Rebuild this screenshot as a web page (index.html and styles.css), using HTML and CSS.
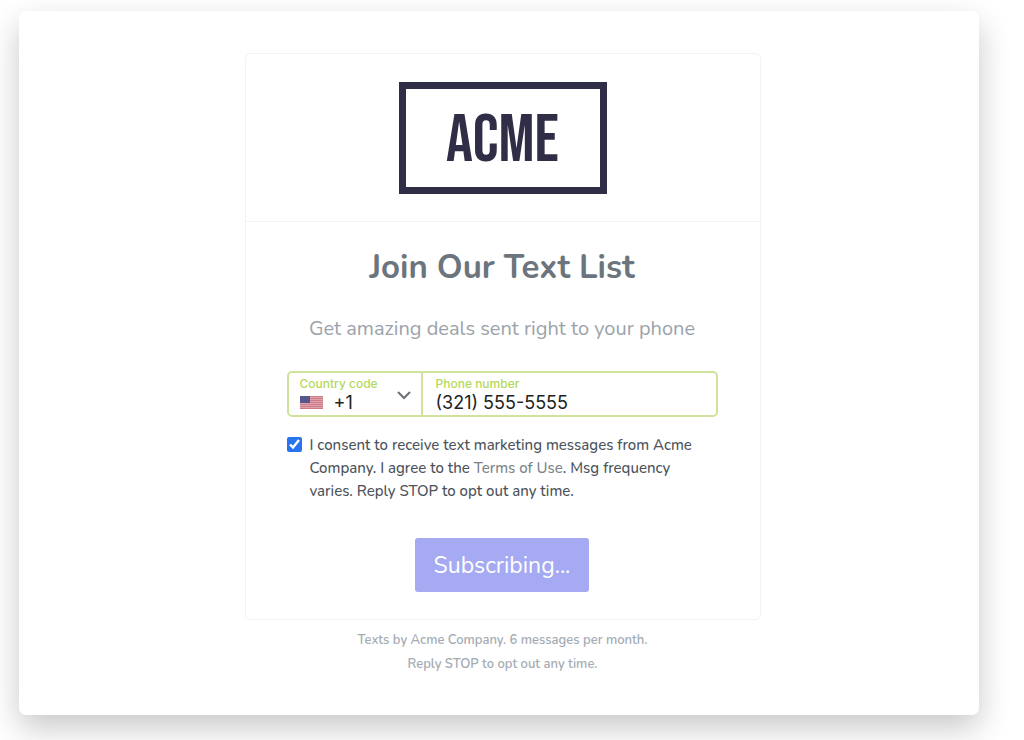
FILE: index.html
```html
<!DOCTYPE html>
<html lang="en">
<head>
    <meta charset="utf-8">
    <meta name="viewport" content="width=device-width, initial-scale=1">
    <title>Join Our Text List</title>
    <link rel="stylesheet" href="styles.css">
</head>
<body>
    <main class="panel">
        <div class="card">
            <div class="card-header">
                <div class="logo">ACME</div>
            </div>
            <form class="signup">
                <h1>Join Our Text List</h1>
                <p class="lead">Get amazing deals sent right to your phone</p>

                <div class="phone-row">
                    <div class="field country">
                        <label for="country">Country code</label>
                        <div class="country-value">
                            <svg class="flag" viewBox="0 0 23 13" aria-hidden="true">
                                <rect width="23" height="13" fill="#e0a3ac"/>
                                <path d="M0 .5h23M0 2.5h23M0 4.5h23M0 6.5h23M0 8.5h23M0 10.5h23M0 12.5h23" stroke="#cc7c88"/>
                                <rect width="10" height="7" fill="#55568c"/>
                            </svg>
                            <select id="country" name="country">
                                <option value="1">+1</option>
                            </select>
                        </div>
                        <svg class="chevron" viewBox="0 0 14 9" aria-hidden="true">
                            <path d="M1 1l6 6 6-6" fill="none" stroke="#6b7075" stroke-width="2"/>
                        </svg>
                    </div>
                    <div class="field number">
                        <label for="phone">Phone number</label>
                        <input type="tel" id="phone" name="phone" value="(321) 555-5555">
                    </div>
                </div>

                <div class="consent">
                    <input type="checkbox" id="consent" name="consent" checked>
                    <label for="consent">I consent to receive text marketing messages from Acme Company. I agree to the <a href="#terms">Terms of Use</a>. Msg frequency varies. Reply STOP to opt out any time.</label>
                </div>

                <button type="submit">Subscribing...</button>
            </form>
        </div>
        <p class="footnote">Texts by Acme Company. 6 messages per month.<br>Reply STOP to opt out any time.</p>
    </main>
</body>
</html>
```
FILE: styles.css
```css
* {
    box-sizing: border-box;
}
html, body {
    margin: 0;
    padding: 0;
}
body {
    min-height: 100vh;
    padding: 11px 45px 25px 19px;
    display: flex;
    background: white;
    font-family: Nunito, "Open Sans", sans-serif;
    overflow: hidden;
}
.panel {
    flex: 1;
    padding: 42px 16px 16px 23px;
    display: flex;
    flex-direction: column;
    align-items: center;
    background: white;
    border-radius: 7px;
    box-shadow: 0 13px 32px rgba(0, 0, 0, 0.22);
}
.card {
    width: 100%;
    max-width: 516px;
    border: 1px solid #f3f3f5;
    border-radius: 5px;
}
.card-header {
    padding: 28px 0 27px;
    display: flex;
    justify-content: center;
    border-bottom: 1px solid #f3f3f5;
}
.logo {
    width: 208px;
    height: 112px;
    padding-top: 5px;
    display: flex;
    align-items: center;
    justify-content: center;
    border: 7px solid #302d47;
    color: #302d47;
    font-family: "Bebas Neue", "Oswald", "Roboto Condensed", "Liberation Sans Narrow", "Liberation Sans", sans-serif;
    font-size: 67px;
    letter-spacing: normal;
}
.signup {
    padding: 24px 42px 27px 41px;
    display: flex;
    flex-direction: column;
    align-items: center;
}
h1 {
    margin: 0;
    color: #6c757d;
    font-size: 33px;
    line-height: 44px;
    font-weight: 700;
}
.lead {
    margin: 24px 0 27px;
    color: #9ba3aa;
    font-size: 20px;
    line-height: 30px;
}
.phone-row {
    width: 100%;
    height: 46px;
    display: flex;
    border: 2px solid #cfe39a;
    border-radius: 5px;
    font-family: Inter, sans-serif;
}
.field {
    display: flex;
    flex-direction: column;
    padding: 3px 0 0 13px;
}
.field label {
    color: #b5d95c;
    font-size: 12px;
    line-height: 16px;
    font-weight: 500;
}
.country {
    position: relative;
    flex: none;
    width: 134px;
    padding-left: 11px;
    border-right: 2px solid #cfe39a;
}
.country-value {
    display: flex;
    align-items: center;
}
.flag {
    flex: none;
    width: 23px;
    height: 13px;
    margin-right: 11px;
}
select, .number input {
    min-width: 0;
    height: 20px;
    margin: 0;
    padding: 0;
    border: 0;
    outline: 0;
    background: transparent;
    color: #222;
    font-family: Inter, sans-serif;
    font-size: 18px;
}
select {
    flex: 1;
    appearance: none;
}
.chevron {
    position: absolute;
    top: 18px;
    right: 10px;
    width: 14px;
    height: 9px;
    pointer-events: none;
}
.number {
    flex: 1;
}
.consent {
    margin-top: 17px;
    padding-right: 12px;
    display: flex;
    align-items: flex-start;
    color: #4c535b;
    font-size: 15px;
    line-height: 23px;
    font-weight: 500;
}
.consent input {
    flex: none;
    width: 15px;
    height: 15px;
    margin: 3px 8px 0 0;
    accent-color: #2874f0;
}
.consent a {
    color: #7d848a;
    text-decoration: none;
}
button {
    height: 54px;
    margin-top: 35px;
    padding: 0 19px;
    border: 0;
    border-radius: 3px;
    background: #a5aaf2;
    color: white;
    font-family: inherit;
    font-size: 23px;
}
.footnote {
    margin: 8px 0 0;
    color: #a4abb2;
    font-size: 13px;
    line-height: 24px;
    font-weight: 600;
    text-align: center;
}
```
